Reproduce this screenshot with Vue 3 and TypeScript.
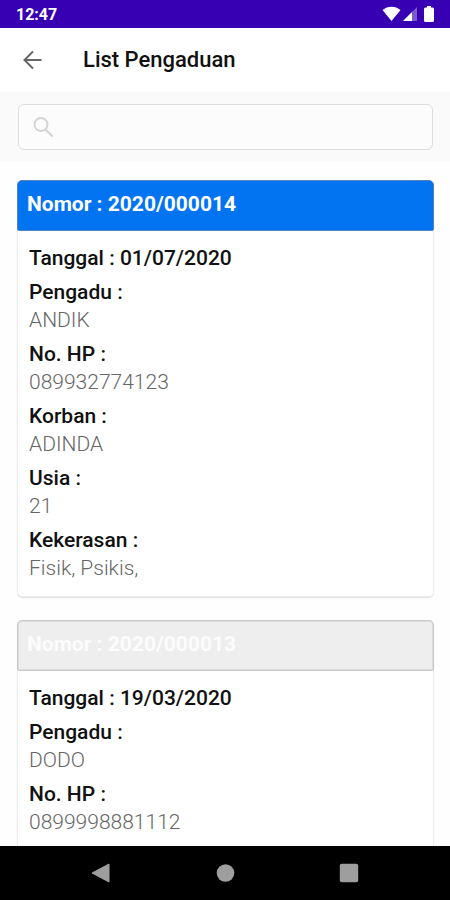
<script setup lang="ts">
import { ref, computed } from 'vue'

interface Field {
  label: string
  value: string
}

interface Report {
  number: string
  date: string
  active: boolean
  fields: Field[]
}

const query = ref('')

const reports: Report[] = [
  {
    number: '2020/000014',
    date: '01/07/2020',
    active: true,
    fields: [
      { label: 'Pengadu', value: 'ANDIK' },
      { label: 'No. HP', value: '089932774123' },
      { label: 'Korban', value: 'ADINDA' },
      { label: 'Usia', value: '21' },
      { label: 'Kekerasan', value: 'Fisik, Psikis,' },
    ],
  },
  {
    number: '2020/000013',
    date: '19/03/2020',
    active: false,
    fields: [
      { label: 'Pengadu', value: 'DODO' },
      { label: 'No. HP', value: '0899998881112' },
    ],
  },
]

const visible = computed(() =>
  reports.filter((r) =>
    [r.number, r.date, ...r.fields.map((f) => f.value)]
      .join(' ')
      .toLowerCase()
      .includes(query.value.toLowerCase()),
  ),
)
</script>

<template>
  <div class="screen">
    <div class="status">
      <span class="clock">12:47</span>
      <div class="indicators">
        <svg width="20" height="16" viewBox="0 0 20 16" aria-hidden="true">
          <path d="M0.500 4C5.500 -0.500 13.500 -0.500 18.500 4L9.500 15Z" fill="#fff" />
        </svg>
        <svg width="16" height="16" viewBox="0 0 16 16" aria-hidden="true">
          <path d="M15 1V15H1Z" fill="#fff" fill-opacity="0.35" />
          <path d="M10 6V15H1Z" fill="#fff" />
        </svg>
        <svg class="battery" width="10" height="16" viewBox="0 0 10 16" aria-hidden="true">
          <path d="M3 0H7V1.500H8.500Q10 1.500 10 3V14.500Q10 16 8.500 16H1.500Q0 16 0 14.500V3Q0 1.500 1.500 1.500H3Z" fill="#fff" />
        </svg>
      </div>
    </div>

    <header class="toolbar">
      <button class="back" type="button" aria-label="Kembali">
        <svg width="20" height="20" viewBox="0 0 20 20" fill="none" stroke="#666" stroke-width="2" aria-hidden="true">
          <path d="M18.500 10H2M10 1.500L1.500 10L10 18.500" />
        </svg>
      </button>
      <h1>List Pengaduan</h1>
    </header>

    <div class="search">
      <label class="box">
        <svg width="20" height="20" viewBox="0 0 20 20" fill="none" stroke="#d4d4d4" stroke-width="2" aria-hidden="true">
          <circle cx="8" cy="7.500" r="6.500" />
          <path d="M12.500 12.500L19.500 19.500" />
        </svg>
        <input v-model="query" type="text" aria-label="Cari pengaduan" />
      </label>
    </div>

    <main class="list">
      <article v-for="r in visible" :key="r.number" class="card">
        <h2 :class="['number', { active: r.active }]">Nomor : {{ r.number }}</h2>
        <div class="details">
          <p class="label">Tanggal : {{ r.date }}</p>
          <dl v-for="f in r.fields" :key="f.label">
            <dt class="label">{{ f.label }} :</dt>
            <dd>{{ f.value }}</dd>
          </dl>
        </div>
      </article>
    </main>

    <nav class="system">
      <button type="button" aria-label="Sebelumnya">
        <svg width="20" height="20" viewBox="0 0 20 20" aria-hidden="true">
          <path d="M18 1V19L1 10Z" fill="#9e9e9e" stroke="#9e9e9e" stroke-linejoin="round" />
        </svg>
      </button>
      <button type="button" aria-label="Beranda">
        <svg width="20" height="20" viewBox="0 0 20 20" aria-hidden="true">
          <circle cx="10.500" cy="10" r="8.800" fill="#9e9e9e" />
        </svg>
      </button>
      <button type="button" aria-label="Terkini">
        <svg width="20" height="20" viewBox="0 0 20 20" aria-hidden="true">
          <rect x="0.800" y="0.800" width="18.400" height="18.400" rx="2" fill="#9e9e9e" />
        </svg>
      </button>
    </nav>
  </div>
</template>

<style>
body {
  margin: 0;
}
</style>

<style scoped>
.screen {
  display: flex;
  flex-direction: column;
  height: 100vh;
  overflow: hidden;
  background: #fefefe;
  color: #111;
  font-family: Roboto, "Liberation Sans", sans-serif;
}

h1,
h2,
p,
dl,
dd {
  margin: 0;
}

button {
  display: flex;
  align-items: center;
  justify-content: center;
  padding: 0;
  border: 0;
  background: none;
}

.status {
  display: flex;
  flex: none;
  align-items: center;
  justify-content: space-between;
  height: 28px;
  padding: 0 16px;
  background: #3700b3;
  color: #fff;
}

.clock {
  font-size: 16px;
  font-weight: 700;
  line-height: 28px;
  padding-top: 2px;
}

.indicators {
  display: flex;
}

.battery {
  margin-left: 6px;
}

.toolbar {
  display: flex;
  flex: none;
  align-items: center;
  gap: 40px;
  height: 64px;
  padding: 0 23px;
  background: #fff;
}

.back {
  height: 40px;
}

h1 {
  font-size: 22px;
  font-weight: 500;
  line-height: 28px;
}

.search {
  flex: none;
  padding: 12px 17px 12px 18px;
  background: #fafafa;
}

.box {
  display: flex;
  align-items: center;
  gap: 12px;
  box-sizing: border-box;
  height: 46px;
  padding: 0 14px;
  border: 1px solid #dedede;
  border-radius: 6px;
  background: #fcfcfc;
}

.box input {
  flex: 1;
  min-width: 0;
  border: 0;
  outline: 0;
  background: none;
  font: inherit;
  font-size: 21px;
}

.list {
  display: flex;
  flex: 1;
  flex-direction: column;
  gap: 23px;
  min-height: 0;
  padding: 18px 16px 0 17px;
  overflow: hidden;
}

.card {
  flex: none;
  border-radius: 5px;
  background: #fff;
  box-shadow: inset 0 0 0 1px #ececec, 0 1px 1px #e2e2e2;
}

.number {
  box-sizing: border-box;
  height: 51px;
  padding: 9px;
  border: 1px solid #c9c9c9;
  border-radius: 5px 5px 2px 2px;
  background: #eee;
  box-shadow: inset 0 0 0 1px #dcdcdc;
  color: #fcfcfc;
  font-size: 21px;
  font-weight: 700;
  line-height: 28px;
}

.number.active {
  border-color: #5583bd;
  background: #0274f2;
  box-shadow: none;
  color: #fff;
}

.details {
  display: flex;
  flex-direction: column;
  gap: 6px;
  padding: 13px 12px 15px;
  font-size: 21px;
  line-height: 28px;
}

.label {
  font-weight: 500;
}

dd {
  color: #666;
  font-weight: 300;
}

.system {
  display: grid;
  flex: none;
  grid-template-columns: repeat(3, 124px);
  justify-content: center;
  height: 54px;
  background: #000;
}
</style>
